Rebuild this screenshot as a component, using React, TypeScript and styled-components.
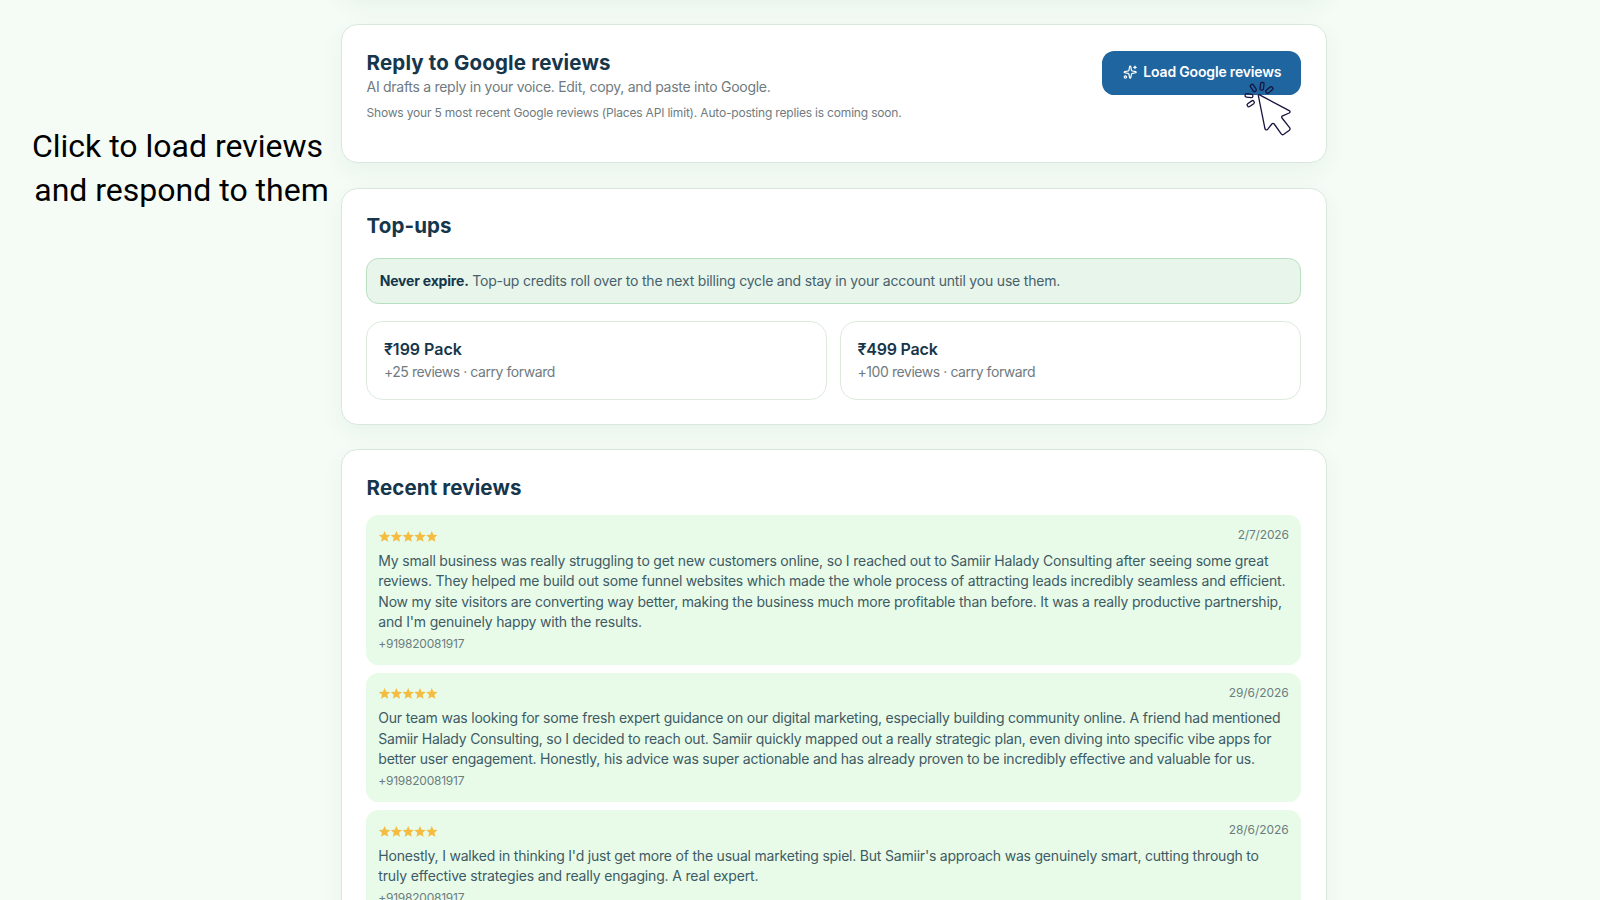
import React, { useLayoutEffect, useRef } from "react";
import styled, { createGlobalStyle } from "styled-components";
import { Sparkles } from "lucide-react";

const GlobalStyle = createGlobalStyle`
  * { box-sizing: border-box; }
  body {
    margin: 0;
    background: #f4fcf5;
    font-family: Inter, "Noto Sans", sans-serif;
    color: #163a4e;
    overflow: hidden;
  }
  h2, p { margin: 0; }
`;

const Page = styled.div`
  display: grid;
  grid-template-columns: 341px 985.5px 1fr;
  height: 900px;
  overflow: hidden;
`;

const Callout = styled.aside`
  padding: 123.5px 0 0 14px;
  width: 341px;
  font: 400 32px/44px Roboto, sans-serif;
  color: #000;
  text-align: center;
  white-space: pre;
`;

const Column = styled.main`
  display: flex;
  flex-direction: column;
  gap: 24.8px;
  margin-top: -40.6px;
`;

const Card = styled.section<{ $height: number }>`
  position: relative;
  flex: none;
  height: ${(p) => p.$height}px;
  padding: 24.6px 24.5px 0 24px;
  border: 1px solid #d9e8dc;
  border-radius: 16.5px;
  background: #fff;
  box-shadow: 0 8px 25px rgba(22, 58, 50, 0.05);
`;

const HeaderRow = styled.div`
  display: flex;
  justify-content: space-between;
  align-items: flex-start;
`;

const Text = styled.span`
  display: block;
  width: max-content;
  white-space: pre;
`;

const Title = styled.h2`
  padding-left: 0.6px;
  font-size: 20.5px;
  line-height: 26px;
  font-weight: 700;
  color: #16364b;
`;

const Subtitle = styled.p`
  font-size: 14px;
  line-height: 20.5px;
  color: #6f7b80;
`;

const Intro = styled(Subtitle)`
  margin-top: 1px;
  padding-left: 0.5px;
`;

const Hint = styled.p`
  margin-top: 7px;
  padding-left: 0.5px;
  font-size: 12px;
  line-height: 17px;
  color: #6f7b80;
`;

const Button = styled.button`
  display: flex;
  align-items: center;
  gap: 6px;
  width: 198.6px;
  height: 44.6px;
  margin-top: 0.9px;
  padding: 0 0 1px 20.5px;
  border: 0;
  border-radius: 12.3px;
  background: #1f659f;
  color: #fff;
  font: 600 14px/20px Inter, sans-serif;
`;

const Cursor = styled.svg`
  position: absolute;
  left: 898px;
  top: 51px;
`;

const Notice = styled.div`
  display: flex;
  align-items: center;
  gap: 3.5px;
  height: 46px;
  margin-top: 19px;
  padding: 0 0 1.6px 12.7px;
  border: 1px solid #b8dfc0;
  border-radius: 12.3px;
  background: #e8f5eb;
  font-size: 14px;
  color: #46616c;
`;

const Strong = styled.strong`
  font-weight: 700;
  color: #16364b;
`;

const Packs = styled.div`
  display: grid;
  grid-template-columns: 1fr 1fr;
  gap: 12.3px;
  margin-top: 17.4px;
`;

const Pack = styled.div`
  height: 78.3px;
  padding: 14.6px 16.9px;
  border: 1px solid #dceade;
  border-radius: 16.4px;
`;

const PackName = styled.div`
  font-size: 16px;
  line-height: 24.6px;
  font-weight: 600;
  color: #16364b;
`;

const Reviews = styled.div`
  display: flex;
  flex-direction: column;
  gap: 8px;
  margin-top: 14.1px;
`;

const Review = styled.article`
  padding: 12.3px;
  border-radius: 12.3px;
  background: #e8fbe8;
`;

const ReviewTop = styled.div`
  display: flex;
  justify-content: space-between;
  align-items: flex-start;
  height: 23.4px;
`;

const Stars = styled.svg`
  display: block;
  margin: 3.4px 0 0 0.4px;
`;

const Meta = styled.div`
  font-size: 12px;
  line-height: 16.4px;
  color: #6c7d7f;
`;

const Body = styled.div`
  margin-bottom: 3.4px;
  font-size: 14px;
  line-height: 20.5px;
  color: #3e5a65;
`;

/* One line of text, tracked so that it fills the given measure. */
function Line({ width, children }: { width: number; children: string }) {
  const ref = useRef<HTMLSpanElement>(null);
  useLayoutEffect(() => {
    const el = ref.current;
    if (!el) return;
    el.style.letterSpacing = "0px";
    const natural = el.getBoundingClientRect().width;
    el.style.letterSpacing = `${(width - natural) / children.length}px`;
  }, [width, children]);
  return <Text ref={ref}>{children}</Text>;
}

const STAR = "M5.6 0 7.2 3.8 11.3 4.1 8.2 6.8 9.2 10.8 5.6 8.7 2 10.8 3 6.8 -0.1 4.1 4 3.8Z";

function StarRow() {
  return (
    <Stars width="60" height="11" viewBox="0 0 60 11" fill="#f4bc40">
      {[0, 1, 2, 3, 4].map((i) => (
        <path key={i} d={STAR} transform={`translate(${i * 11.8} 0)`} />
      ))}
    </Stars>
  );
}

/* Rays around the pointer tip: centre x, centre y, rotation from vertical. */
const rays = [
  [13.3, 12, -34],
  [22, 10.3, 7],
  [29.3, 14, 50],
  [9, 19.7, -83],
  [10.7, 27.7, 55],
];

type ReviewData = { date: string; dateWidth: number; lines: [string, number][] };

const reviews: ReviewData[] = [
  {
    date: "2/7/2026",
    dateWidth: 51,
    lines: [
      ["My small business was really struggling to get new customers online, so I reached out to Samiir Halady Consulting after seeing some great", 890],
      ["reviews. They helped me build out some funnel websites which made the whole process of attracting leads incredibly seamless and efficient.", 907],
      ["Now my site visitors are converting way better, making the business much more profitable than before. It was a really productive partnership,", 903.5],
      ["and I'm genuinely happy with the results.", 263.5],
    ],
  },
  {
    date: "29/6/2026",
    dateWidth: 60,
    lines: [
      ["Our team was looking for some fresh expert guidance on our digital marketing, especially building community online. A friend had mentioned", 902],
      ["Samiir Halady Consulting, so I decided to reach out. Samiir quickly mapped out a really strategic plan, even diving into specific vibe apps for", 893],
      ["better user engagement. Honestly, his advice was super actionable and has already proven to be incredibly effective and valuable for us.", 876.5],
    ],
  },
  {
    date: "28/6/2026",
    dateWidth: 60,
    lines: [
      ["Honestly, I walked in thinking I'd just get more of the usual marketing spiel. But Samiir's approach was genuinely smart, cutting through to", 880.5],
      ["truly effective strategies and really engaging. A real expert.", 380],
    ],
  },
];

export default function App() {
  return (
    <>
      <GlobalStyle />
      <Page>
        <Callout>{"Click to load reviews\n and respond to them"}</Callout>
        <Column>
          <Card $height={40} />
          <Card $height={138.5}>
            <HeaderRow>
              <div>
                <Title><Line width={244}>Reply to Google reviews</Line></Title>
                <Intro><Line width={404}>AI drafts a reply in your voice. Edit, copy, and paste into Google.</Line></Intro>
                <Hint><Line width={535}>Shows your 5 most recent Google reviews (Places API limit). Auto-posting replies is coming soon.</Line></Hint>
              </div>
              <Button>
                <Sparkles size={14.4} strokeWidth={2} />
                <Line width={138}>Load Google reviews</Line>
              </Button>
            </HeaderRow>
            <Cursor width="54" height="64" viewBox="0 0 54 64" fill="none" stroke="#17153f" strokeWidth="1.3" strokeLinejoin="round">
              <path
                fill="#fff"
                d="M19.6 18.9 L49.2 34.6 Q51 35.8 49.2 37 L42.6 39.9 Q41 40.7 42 42 L49.6 51.6 Q50.6 53 49.4 54.2 L43.8 58.3 Q42.3 59.3 41.2 57.9 L34.2 48 Q33 46.6 31.8 48 L27.8 53.2 Q25.6 54.8 25 52.8 L18.4 19.9 Q18.2 18.3 19.6 18.9Z"
              />
              {rays.map(([x, y, angle]) => (
                <rect key={`${x}-${y}`} x={-1.7} y={-3.9} width={3.4} height={7.8} rx={1.4} transform={`translate(${x} ${y}) rotate(${angle})`} />
              ))}
            </Cursor>
          </Card>
          <Card $height={237}>
            <Title><Line width={85}>Top-ups</Line></Title>
            <Notice>
              <Strong><Line width={89}>Never expire.</Line></Strong>
              <Line width={588}>Top-up credits roll over to the next billing cycle and stay in your account until you use them.</Line>
            </Notice>
            <Packs>
              <Pack>
                <PackName><Line width={78}>₹199 Pack</Line></PackName>
                <Subtitle><Line width={171}>+25 reviews · carry forward</Line></Subtitle>
              </Pack>
              <Pack>
                <PackName><Line width={80}>₹499 Pack</Line></PackName>
                <Subtitle><Line width={177.5}>+100 reviews · carry forward</Line></Subtitle>
              </Pack>
            </Packs>
          </Card>
          <Card $height={500}>
            <Title><Line width={155}>Recent reviews</Line></Title>
            <Reviews>
              {reviews.map((r) => (
                <Review key={r.date}>
                  <ReviewTop>
                    <StarRow />
                    <Meta><Line width={r.dateWidth}>{r.date}</Line></Meta>
                  </ReviewTop>
                  <Body>
                    {r.lines.map(([text, width]) => (
                      <Line key={text} width={width}>{text}</Line>
                    ))}
                  </Body>
                  <Meta><Line width={86}>+919820081917</Line></Meta>
                </Review>
              ))}
            </Reviews>
          </Card>
        </Column>
      </Page>
    </>
  );
}
